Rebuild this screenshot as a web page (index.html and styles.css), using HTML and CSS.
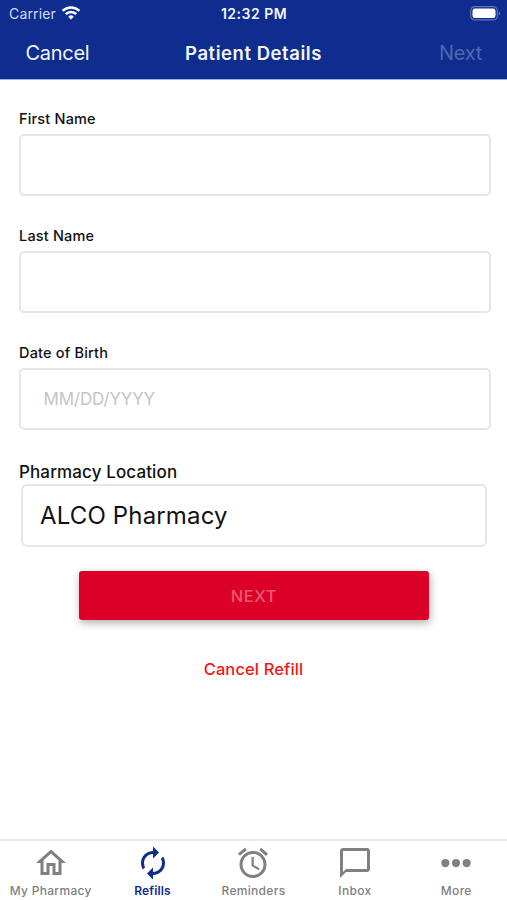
FILE: index.html
```html
<!DOCTYPE html>
<html lang="en">
<head>
<meta charset="utf-8">
<meta name="viewport" content="width=device-width, initial-scale=1">
<title>Patient Details</title>
<link rel="stylesheet" href="styles.css">
</head>
<body>
<div class="screen">
  <header class="top">
    <div class="status">
      <div class="carrier"><span>Carrier</span>
        <svg class="wifi" width="20" height="16" viewBox="0 0 20 16" fill="none" stroke="currentColor" stroke-width="2.6"><path d="M1.6 5.9a12 12 0 0 1 16.8 0M4.7 9.1a7.6 7.6 0 0 1 10.6 0"/><path d="M10 14.5l-2.8-2.8a4 4 0 0 1 5.6 0z" fill="currentColor" stroke="none"/></svg>
      </div>
      <time class="clock">12:32 PM</time>
      <svg class="battery" width="31" height="15" viewBox="0 0 31 15"><rect x=".7" y=".7" width="26.6" height="13.2" rx="4" fill="none" stroke="#6173b8" stroke-width="1.2"/><rect x="2.5" y="2.5" width="23" height="9.6" rx="2.4" fill="#fff"/><path d="M28.8 5.2c2 .8 2 3.4 0 4.2z" fill="#6173b8"/></svg>
    </div>
    <nav class="navbar">
      <a class="nav-action">Cancel</a>
      <h1 class="title">Patient Details</h1>
      <a class="nav-action disabled">Next</a>
    </nav>
  </header>
  <main class="form">
    <div class="field"><label class="label" for="first">First Name</label><input class="input" id="first" type="text"></div>
    <div class="field"><label class="label" for="last">Last Name</label><input class="input" id="last" type="text"></div>
    <div class="field"><label class="label" for="dob">Date of Birth</label><input class="input" id="dob" type="text" placeholder="MM/DD/YYYY"></div>
    <div class="location"><div class="location-label">Pharmacy Location</div><div class="select">ALCO Pharmacy</div></div>
    <button class="submit" type="button">NEXT</button>
    <a class="cancel-refill">Cancel Refill</a>
  </main>
  <nav class="tabs">
    <a class="tab"><svg class="icon" viewBox="0 0 24 24"><path d="M12 5.69l5 4.5V18h-2v-6H9v6H7v-7.81l5-4.5M12 3L2 12h3v8h6v-6h2v6h6v-8h3L12 3z"/></svg><span>My Pharmacy</span></a>
    <a class="tab active"><svg class="icon" viewBox="0 0 24 24"><path d="M12 6v3l4-4-4-4v3c-4.42 0-8 3.58-8 8 0 1.57.46 3.03 1.24 4.26L6.7 14.8c-.45-.83-.7-1.79-.7-2.8 0-3.31 2.69-6 6-6zm6.76 1.74L17.3 9.2c.44.84.7 1.79.7 2.8 0 3.31-2.69 6-6 6v-3l-4 4 4 4v-3c4.42 0 8-3.58 8-8 0-1.57-.46-3.03-1.24-4.26z"/></svg><span>Refills</span></a>
    <a class="tab"><svg class="icon" viewBox="0 0 24 24"><path d="M22 5.72l-4.6-3.86-1.29 1.53 4.6 3.86L22 5.72zM7.88 3.39L6.6 1.86 2 5.71l1.29 1.53 4.59-3.85zM12.5 8H11v6l4.75 2.85.75-1.23-4-2.37V8zM12 4c-4.97 0-9 4.03-9 9s4.02 9 9 9a9 9 0 0 0 0-18zm0 16c-3.87 0-7-3.13-7-7s3.13-7 7-7 7 3.13 7 7-3.13 7-7 7z"/></svg><span>Reminders</span></a>
    <a class="tab"><svg class="icon" viewBox="0 0 24 24"><path d="M20 2H4c-1.1 0-2 .9-2 2v18l4-4h14c1.1 0 2-.9 2-2V4c0-1.1-.9-2-2-2zm0 14H6l-2 2V4h16v12z"/></svg><span>Inbox</span></a>
    <a class="tab"><svg class="icon" viewBox="0 0 24 24"><circle cx="4.9" cy="12" r="2.75"/><circle cx="12" cy="12" r="2.75"/><circle cx="19.1" cy="12" r="2.75"/></svg><span>More</span></a>
  </nav>
</div>
</body>
</html>
```
FILE: styles.css
```css
* { box-sizing: border-box; }
body { margin: 0; background: #fff; color: #111; font-family: Inter, "Liberation Sans", sans-serif; }
.screen { height: 900px; display: flex; flex-direction: column; overflow: hidden; }
.top { height: 80px; background: #0f2c8f; color: #f4f6ff; border-bottom: 1px solid #a3afd8; flex: none; }
.status { height: 27px; display: grid; grid-template-columns: 1fr auto 1fr; align-items: center; padding: 0 7px 0 9px; }
.carrier { display: flex; align-items: center; gap: 5px; font-size: 14px; letter-spacing: .15px; color: #d5dcf6; }
.wifi { color: #fff; margin-top: -2px; }
.clock { font-size: 14px; font-weight: 600; letter-spacing: .5px; margin-right: 1px; }
.battery { justify-self: end; margin-right: -1px; }
.navbar { height: 51px; display: grid; grid-template-columns: 1fr auto 1fr; align-items: center; padding: 0 25px; }
.nav-action { font-size: 20px; letter-spacing: -.3px; padding-left: .5px; }
.nav-action.disabled { justify-self: end; color: #5267b0; }
.title { margin: 0; font-size: 18.5px; font-weight: 600; letter-spacing: .55px; }
.form { flex: 1; display: flex; flex-direction: column; padding: 29px 16px 0 19px; }
.field { height: 117px; display: flex; flex-direction: column; }
.label { height: 25px; line-height: 20px; font-size: 14.5px; font-weight: 500; letter-spacing: .18px; }
.input { width: 472px; height: 62px; padding: 0 22.5px; border: 2px solid #e6e6e6; border-radius: 5px; background: #fff; font: 400 17px Inter, sans-serif; letter-spacing: -.15px; outline: none; }
.input::placeholder { color: #c4c4c4; opacity: 1; }
.location-label { height: 24px; line-height: 24px; font-size: 17px; font-weight: 500; letter-spacing: .12px; }
.select { width: 466px; height: 63px; margin-left: 2px; padding-left: 17px; line-height: 59px; border: 2px solid #e6e6e6; border-radius: 6px; font-size: 24px; letter-spacing: .15px; }
.submit { width: 350px; height: 49px; margin: 24px 0 0 60px; border: 0; border-radius: 3px; background: #dc0028; color: #ea5a74; font: 500 16.5px Inter, sans-serif; letter-spacing: .6px; box-shadow: 1px 3px 8px rgba(0,0,0,.32); flex: none; }
.cancel-refill { align-self: center; margin: 38px 3px 0 0; line-height: 22px; font-size: 16.5px; font-weight: 500; letter-spacing: .12px; color: #f31515; }
.tabs { height: 61px; display: grid; grid-template-columns: repeat(5, 1fr); border-top: 2px solid #ebebeb; flex: none; }
.tab { display: flex; flex-direction: column; align-items: center; padding-top: 4px; color: #808080; font-size: 12px; font-weight: 500; line-height: 16px; letter-spacing: .3px; white-space: nowrap; }
.tab.active { padding-left: 1px; color: #102c90; font-weight: 600; letter-spacing: .15px; }
.icon { width: 36px; height: 36px; margin-bottom: 2px; fill: currentColor; flex: none; }
```
